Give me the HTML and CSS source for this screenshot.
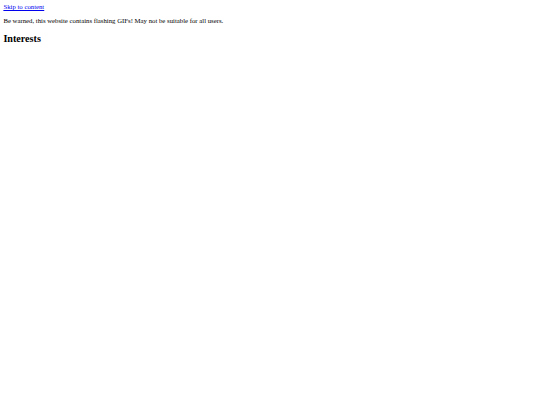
FILE: index.html
```html
<!DOCTYPE html>
<html>
<head>
<meta charset="utf-8">
<link rel="stylesheet" href="styles.css">
</head>
<body class="page">
<a class="skip" href="#content">Skip to content</a>
<p class="warning">Be warned, this website contains flashing GIFs! May not be suitable for all users.</p>
<h2 class="title" id="content">Interests</h2>
</body>
</html>
```
FILE: styles.css
```css
.page {
  margin: 3.375px;
  font-family: "Liberation Serif", serif;
  font-size: 6.75px;
  line-height: normal;
  color: #000;
  background: #fff;
}
.skip {
  color: #0000ee;
}
.warning {
  margin: 6.75px 0;
}
.title {
  font-size: 10.125px;
  margin: 8.4px 0;
}
```
